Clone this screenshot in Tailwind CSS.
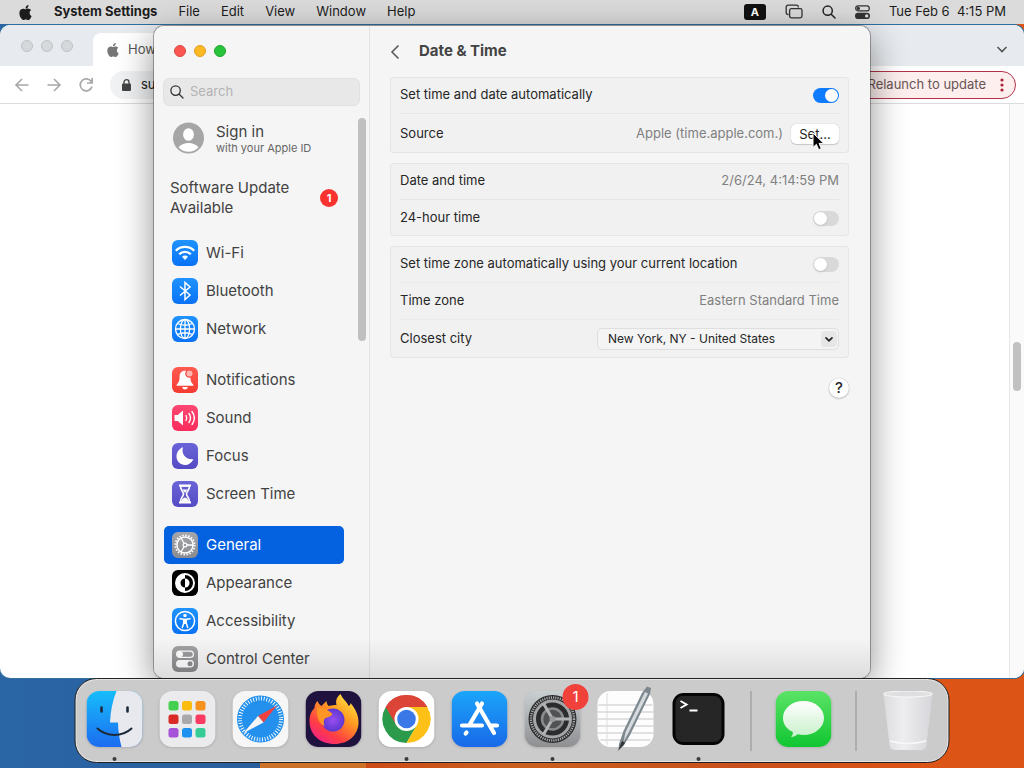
<!DOCTYPE html>
<html lang="en">

<head>
  <meta charset="UTF-8" />
  <meta name="viewport" content="width=device-width, initial-scale=1.0" />
  <title>Date &amp; Time</title>
  <script src="https://cdn.jsdelivr.net/npm/@tailwindcss/browser@4"></script>
</head>

<body class="font-['Inter','Liberation_Sans',sans-serif] text-[13px] h-screen overflow-hidden flex flex-col bg-[linear-gradient(90deg,#2a65a6_0,#2a5f9c_25.4%,#cb7128_25.4%,#cb7128_35.700%,#cc4a17_35.700%,#c9601f_50%,#c9501b_72%,#dc5416_90%)]">

  <svg class="hidden">
    <symbol id="apple" viewBox="0 0 24 24">
      <path fill="currentColor" d="M12.152 6.896c-.948 0-2.415-1.078-3.96-1.04-2.04.027-3.91 1.183-4.961 3.014-2.117 3.675-.546 9.103 1.519 12.09 1.013 1.454 2.208 3.09 3.792 3.039 1.52-.065 2.09-.987 3.935-.987 1.831 0 2.35.987 3.96.948 1.637-.026 2.676-1.48 3.676-2.948 1.156-1.688 1.636-3.325 1.662-3.415-.039-.013-3.182-1.221-3.22-4.857-.026-3.04 2.48-4.494 2.597-4.559-1.429-2.09-3.623-2.324-4.39-2.376-2-.156-3.675 1.09-4.61 1.09zM15.53 3.83c.843-1.012 1.4-2.427 1.245-3.83-1.207.052-2.662.805-3.532 1.818-.78.896-1.454 2.338-1.273 3.714 1.338.104 2.715-.688 3.559-1.701" />
    </symbol>
  </svg>

  <!-- Menu bar -->
  <header class="h-6 shrink-0 flex items-center justify-between bg-[#dbdbdb] text-[#1c1c1c] pl-[18px] pr-[18px]">
    <nav class="flex items-center gap-[21px]">
      <svg class="w-[15px] h-[15px]"><use href="#apple" /></svg>
      <a href="#" class="font-bold">System Settings</a>
      <a href="#">File</a>
      <a href="#">Edit</a>
      <a href="#">View</a>
      <a href="#">Window</a>
      <a href="#">Help</a>
    </nav>
    <div class="flex items-center gap-[19px]">
      <span class="w-[22px] h-4 rounded-[3px] bg-[#111] text-white text-[11px] leading-4 font-bold text-center">A</span>
      <svg class="w-[18px] h-4" viewBox="0 0 18 16" fill="none" stroke="#333" stroke-width="1.3">
        <path d="M3.500 10.500H3A1.800 1.800 0 0 1 1.200 8.700V3A1.800 1.800 0 0 1 3 1.200h8.500A1.800 1.800 0 0 1 13.300 3v.5" />
        <rect x="4.600" y="4.600" width="12.400" height="9.300" rx="1.800" />
      </svg>
      <svg class="w-[14px] h-[14px]" viewBox="0 0 14 14" fill="none" stroke="#222" stroke-width="1.500" stroke-linecap="round">
        <circle cx="5.700" cy="5.700" r="4.600" />
        <path d="M9.200 9.200L13 13" />
      </svg>
      <svg class="w-[15px] h-[14px]" viewBox="0 0 15 14">
        <rect x=".7" y=".9" width="13.600" height="5" rx="2.500" fill="none" stroke="#333" stroke-width="1.200" />
        <circle cx="3.300" cy="3.400" r="1.700" fill="#333" />
        <rect x="0" y="7.800" width="15" height="6.200" rx="3.100" fill="#333" />
        <circle cx="11.700" cy="10.900" r="1.700" fill="#dbdbdb" />
      </svg>
      <time class="whitespace-pre">Tue Feb 6  4:15 PM</time>
    </div>
  </header>

  <main class="relative flex-1">

    <!-- Browser window in the background -->
    <section class="absolute inset-x-0 top-px bottom-[90px] rounded-[10px] overflow-hidden bg-white flex flex-col shadow-[0_0_0_1px_#2f6f9f]">
      <div class="h-[41px] shrink-0 bg-[#e7eaee] flex items-end justify-between pr-4">
        <div class="flex items-end">
          <div class="flex gap-2 pl-[21px] pr-5 pb-[14px]">
            <span class="w-3 h-3 rounded-full bg-[#d6d9dc] border border-[#bfc2c5]"></span>
            <span class="w-3 h-3 rounded-full bg-[#d6d9dc] border border-[#bfc2c5]"></span>
            <span class="w-3 h-3 rounded-full bg-[#d6d9dc] border border-[#bfc2c5]"></span>
          </div>
          <div class="w-60 h-[33px] bg-white rounded-t-lg flex items-center gap-2 pl-[13px] text-[#555]">
            <svg class="w-[14px] h-[14px] text-[#777]"><use href="#apple" /></svg>
            <span>How to</span>
          </div>
        </div>
        <svg class="w-3 h-[33px]" viewBox="0 0 12 33" fill="none" stroke="#555" stroke-width="1.600"><path d="M1.500 14L6 18.500 10.500 14" /></svg>
      </div>
      <div class="h-[38px] shrink-0 border-b border-[#dcdcdc] flex items-center justify-between pl-[14px] pr-2">
        <div class="flex items-center gap-4 text-[#a8a8a8]">
          <svg class="w-4 h-4" viewBox="0 0 16 16" fill="none" stroke="currentColor" stroke-width="1.600"><path d="M14.500 8H2M8 2L2 8l6 6" /></svg>
          <svg class="w-4 h-4" viewBox="0 0 16 16" fill="none" stroke="currentColor" stroke-width="1.600"><path d="M1.500 8H14M8 2l6 6-6 6" /></svg>
          <svg class="w-4 h-4" viewBox="0 0 16 16" fill="none" stroke="currentColor" stroke-width="1.700"><path d="M13.500 5A6 6 0 1 0 14 9.500M14.200 1v5H9" /></svg>
          <div class="w-80 h-7 rounded-full bg-[#f1f2f3] flex items-center gap-[10px] pl-3 text-[#222]">
            <svg class="w-[9px] h-3" viewBox="0 0 9 12"><rect y="4.500" width="9" height="7.500" rx="1" fill="#444" /><path d="M2 5V3.200a2.500 2.500 0 0 1 5 0V5" fill="none" stroke="#444" stroke-width="1.300" /></svg>
            <span>support.apple.com</span>
          </div>
        </div>
        <button class="h-7 rounded-full border border-[#b3324a] bg-[#fcefed] flex items-center gap-[14px] pl-3 pr-[11px] text-[#6b5355]">
          Relaunch to update
          <svg class="w-1 h-[14px]" viewBox="0 0 4 14" fill="#a82238"><circle cx="2" cy="2" r="1.600" /><circle cx="2" cy="7" r="1.600" /><circle cx="2" cy="12" r="1.600" /></svg>
        </button>
      </div>
      <div class="flex-1 flex justify-end">
        <div class="w-[15px] border-l border-[#e8e8e8] bg-[#fafafa] flex flex-col items-center pt-[238px]">
          <span class="w-2 h-[49px] rounded-full bg-[#c1c1c1]"></span>
        </div>
      </div>
    </section>

    <!-- System Settings window -->
    <section class="absolute top-[2px] bottom-[90px] left-1/2 -translate-x-1/2 w-[716px] rounded-[10px] shadow-[0_0_0_1px_rgba(0,0,0,0.3),0_10px_36px_rgba(0,0,0,0.45)]">
      <div class="relative h-full rounded-[10px] overflow-hidden bg-[#f5f5f5] flex">

        <aside class="w-[216px] shrink-0 border-r border-[#e2e2e2] flex flex-col text-[15px] text-[#424242]">
          <div class="h-[50px] shrink-0 flex items-center gap-2 pl-5">
            <button aria-label="Close" class="w-3 h-3 rounded-full bg-[#fc5650] border border-[#dc4843]"></button>
            <button aria-label="Minimize" class="w-3 h-3 rounded-full bg-[#fdb924] border border-[#dfa023]"></button>
            <button aria-label="Zoom" class="w-3 h-3 rounded-full bg-[#27c33b] border border-[#1ea62d]"></button>
          </div>
          <label class="mt-[2px] mx-[9px] h-7 shrink-0 rounded-md bg-[#e8e8e8] border border-[#e1e1e1] flex items-center gap-[6px] pl-[6px]">
            <svg class="w-[14px] h-[14px]" viewBox="0 0 14 14" fill="none" stroke="#333" stroke-width="1.300" stroke-linecap="round"><circle cx="5.600" cy="5.600" r="4.700" /><path d="M9.200 9.200L13 13" /></svg>
            <input type="text" placeholder="Search" aria-label="Search" class="w-40 text-[13px] outline-none placeholder:text-[#b3b3b3]" />
          </label>

          <div class="relative flex-1 min-h-0 overflow-hidden pl-[10px] pr-[25px]">
            <a href="#" class="mt-4 flex items-center gap-3 pl-[9px]">
              <svg class="w-[31px] h-8" viewBox="0 0 31 31">
                <circle cx="15.500" cy="15.500" r="15.500" fill="#a6a6a6" />
                <ellipse cx="15.500" cy="12" rx="5.400" ry="6.300" fill="#fff" />
                <path d="M5.500 25c2-3 6-4.500 10-4.500s8 1.500 10 4.500a14 14 0 0 1-20 0z" fill="#fff" />
              </svg>
              <span class="flex flex-col">
                <span class="leading-5">Sign in</span>
                <span class="text-[11px] leading-3 text-[#666]">with your Apple ID</span>
              </span>
            </a>
            <a href="#" class="mt-6 flex items-center justify-between px-[6px] leading-5">
              <span class="w-32">Software Update Available</span>
              <span class="w-[18px] h-[18px] rounded-full bg-[#f9322f] text-white text-[11px] leading-[18px] font-bold text-center">1</span>
            </a>

            <nav class="mt-4 flex flex-col gap-[13px]">
              <div>
                <a href="#" class="h-[38px] flex items-center gap-2 pl-2">
                  <svg class="w-[26px] h-[26px] rounded-md bg-linear-to-b from-[#1f93ff] to-[#0a72f5]" viewBox="0 0 26 26" fill="none" stroke="#fff" stroke-width="2.300">
                    <path d="M3.800 10.700a13 13 0 0 1 18.400 0" /><path d="M7.200 14.200a8.200 8.200 0 0 1 11.600 0" />
                    <path d="M13 20l-3-3.300a4.200 4.200 0 0 1 6 0z" fill="#fff" stroke="none" />
                  </svg>
                  Wi-Fi
                </a>
                <a href="#" class="h-[38px] flex items-center gap-2 pl-2">
                  <svg class="w-[26px] h-[26px] rounded-md bg-linear-to-b from-[#1f93ff] to-[#0a72f5]" viewBox="0 0 26 26" fill="none" stroke="#fff" stroke-width="1.500">
                    <path d="M8 8.500l10 8.500-5 4.500V4.500l5 4.500-10 8.500" />
                  </svg>
                  Bluetooth
                </a>
                <a href="#" class="h-[38px] flex items-center gap-2 pl-2">
                  <svg class="w-[26px] h-[26px] rounded-md bg-linear-to-b from-[#1f93ff] to-[#0a72f5]" viewBox="0 0 26 26" fill="none" stroke="#fff" stroke-width="1.300">
                    <circle cx="13" cy="13" r="9.500" /><ellipse cx="13" cy="13" rx="4.600" ry="9.500" />
                    <path d="M13 3.500v19M3.500 13h19M5.500 7.500q7.500 3.500 15 0M5.500 18.500q7.500-3.500 15 0" />
                  </svg>
                  Network
                </a>
              </div>
              <div>
                <a href="#" class="h-[38px] flex items-center gap-2 pl-2">
                  <svg class="w-[26px] h-[26px] rounded-md bg-linear-to-b from-[#ff5a50] to-[#f53a30]" viewBox="0 0 26 26">
                    <path d="M13 3.800c3.600 0 5.300 2.400 5.400 5.700.1 5 1 6.300 3 8.200v1H4.600v-1c2-1.900 2.900-3.200 3-8.200.1-3.300 1.800-5.700 5.400-5.700zM10.300 20h5.400a2.700 2.400 0 0 1-5.400 0z" fill="#fff" />
                    <circle cx="17.500" cy="6.500" r="3.700" fill="#ffb6b0" stroke="#fa4b41" stroke-width="1.300" />
                  </svg>
                  Notifications
                </a>
                <a href="#" class="h-[38px] flex items-center gap-2 pl-2">
                  <svg class="w-[26px] h-[26px] rounded-md bg-linear-to-b from-[#ff4672] to-[#f92c5c]" viewBox="0 0 26 26" fill="none" stroke="#fff" stroke-width="1.400" stroke-linecap="round">
                    <path d="M2.500 10h3.300L11 5.500v15L5.800 16H2.500z" fill="#fff" stroke="none" />
                    <path d="M14 10.500q1.500 2.500 0 5M17 8.500q3 4.500 0 9M20 6.500q4.800 6.500 0 13" />
                  </svg>
                  Sound
                </a>
                <a href="#" class="h-[38px] flex items-center gap-2 pl-2">
                  <svg class="w-[26px] h-[26px] rounded-md bg-linear-to-b from-[#6b64d8] to-[#554bc4]" viewBox="0 0 26 26">
                    <path d="M11 4.300C9 11 13.500 17 21.500 16.200 19.500 20 16.500 22 13 22c-4.700 0-8.500-3.700-8.500-8.400 0-4.200 2.600-8 6.500-9.300z" fill="#fff" />
                  </svg>
                  Focus
                </a>
                <a href="#" class="h-[38px] flex items-center gap-2 pl-2">
                  <svg class="w-[26px] h-[26px] rounded-md bg-linear-to-b from-[#6b64d8] to-[#554bc4]" viewBox="0 0 26 26" fill="none" stroke="#fff" stroke-width="1.600" stroke-linejoin="round">
                    <path d="M7 4.500h12M7 21.500h12" stroke-width="2" />
                    <path d="M8.500 5c0 4.500 3 5.500 3 8s-3 3.500-3 8h9c0-4.500-3-5.500-3-8s3-3.500 3-8z" />
                    <path d="M10.500 8.500h5L13 12zM9.500 20.500c0-2 1.500-3.500 3.500-4 2 .5 3.500 2 3.500 4z" fill="#fff" stroke="none" />
                  </svg>
                  Screen Time
                </a>
              </div>
              <div>
                <a href="#" class="h-[38px] flex items-center gap-2 pl-2 rounded-[5px] bg-[#0461e0] text-white">
                  <svg class="w-[26px] h-[26px] rounded-md bg-linear-to-b from-[#a5a6aa] to-[#8b8c91]" viewBox="0 0 26 26" fill="none" stroke="#fff">
                    <circle cx="13" cy="13" r="9.700" stroke-width="1.800" stroke-dasharray="1.500 1.547" />
                    <circle cx="13" cy="13" r="8.100" stroke-width="1.500" />
                    <circle cx="13" cy="13" r="1.900" stroke-width="1.200" />
                    <path d="M15 13h6M12 11.300L9 6M12 14.700L9 20" stroke-width="1.300" />
                  </svg>
                  General
                </a>
                <a href="#" class="h-[38px] flex items-center gap-2 pl-2">
                  <svg class="w-[26px] h-[26px] rounded-md bg-black" viewBox="0 0 26 26">
                    <circle cx="13" cy="13" r="9" fill="none" stroke="#fff" stroke-width="2" />
                    <path d="M13 4a9 9 0 0 0 0 18v-4.500a4.500 4.500 0 0 1 0-9z" fill="#fff" />
                    <path d="M13 8.500a4.500 4.500 0 0 1 0 9z" fill="#fff" />
                  </svg>
                  Appearance
                </a>
                <a href="#" class="h-[38px] flex items-center gap-2 pl-2">
                  <svg class="w-[26px] h-[26px] rounded-md bg-linear-to-b from-[#1f93ff] to-[#0a72f5]" viewBox="0 0 26 26" fill="none" stroke="#fff" stroke-linecap="round">
                    <circle cx="13" cy="13" r="9.600" stroke-width="1.500" />
                    <circle cx="13" cy="7.500" r="1.700" fill="#fff" stroke="none" />
                    <path d="M8 10.700l5 .9 5-.9M11.800 12v3l-1.500 4.500M14.200 12v3l1.500 4.500" stroke-width="1.500" />
                    <path d="M11.300 11.300h3.400V16h-3.400z" fill="#fff" stroke="none" />
                  </svg>
                  Accessibility
                </a>
                <a href="#" class="h-[38px] flex items-center gap-2 pl-2">
                  <svg class="w-[26px] h-[26px] rounded-md bg-linear-to-b from-[#a2a2a5] to-[#89898c]" viewBox="0 0 26 26">
                    <rect x="4.600" y="5.100" width="16.800" height="6.300" rx="3.150" fill="none" stroke="#fff" stroke-width="1.300" />
                    <circle cx="8" cy="8.250" r="3" fill="#fff" />
                    <rect x="4" y="14" width="18" height="7.600" rx="3.800" fill="#fff" />
                    <circle cx="18" cy="17.800" r="2.500" fill="#8d8d90" />
                  </svg>
                  Control Center
                </a>
              </div>
            </nav>
            <span class="absolute right-[3px] top-3 w-2 h-[223px] rounded-full bg-[#c0c0c0]"></span>
          </div>
        </aside>

        <div class="flex-1 pl-5 pr-[21px] text-[#262626]">
          <div class="h-[51px] flex items-center gap-[18px]">
            <button aria-label="Back"><svg class="w-[11px] h-4" viewBox="0 0 11 16" fill="none" stroke="#555" stroke-width="1.500"><path d="M8.500 1.500L2 8l6.500 6.500" /></svg></button>
            <h1 class="text-[15px] font-bold text-[#444]">Date &amp; Time</h1>
          </div>

          <div class="flex flex-col gap-[10px]">
            <div class="bg-[#f1f1f1] rounded-sm inset-ring inset-ring-[#e5e5e5] px-[10px] divide-y divide-[#e6e6e6]">
              <div class="h-[37px] flex items-center justify-between">
                <label for="auto-time">Set time and date automatically</label>
                <input id="auto-time" type="checkbox" checked class="appearance-none w-[26px] h-[15px] rounded-full bg-[#d9d9d9] checked:bg-[#0f7bff] p-px flex checked:justify-end before:w-[13px] before:h-[13px] before:rounded-full before:bg-white" />
              </div>
              <div class="h-[39px] flex items-center justify-between">
                <span>Source</span>
                <div class="flex items-center gap-2">
                  <span class="text-[#808080]">Apple (time.apple.com.)</span>
                  <button class="w-12 h-5 rounded-[5px] bg-white shadow-[0_0_1px_rgba(0,0,0,0.3),0_1px_1px_rgba(0,0,0,0.15)] leading-5">Set...</button>
                </div>
              </div>
            </div>

            <div class="bg-[#f1f1f1] rounded-sm inset-ring inset-ring-[#e5e5e5] px-[10px] divide-y divide-[#e6e6e6]">
              <div class="h-[37px] flex items-center justify-between">
                <span>Date and time</span>
                <span class="text-[#808080]">2/6/24, 4:14:59 PM</span>
              </div>
              <div class="h-9 flex items-center justify-between">
                <label for="hour24">24-hour time</label>
                <input id="hour24" type="checkbox" class="appearance-none w-[26px] h-[15px] rounded-full bg-[#d9d9d9] checked:bg-[#0f7bff] p-px flex checked:justify-end before:w-[13px] before:h-[13px] before:rounded-full before:bg-white before:shadow" />
              </div>
            </div>

            <div class="bg-[#f1f1f1] rounded-sm inset-ring inset-ring-[#e5e5e5] px-[10px] divide-y divide-[#eaeaea]">
              <div class="h-[37px] flex items-center justify-between">
                <label for="auto-zone">Set time zone automatically using your current location</label>
                <input id="auto-zone" type="checkbox" class="appearance-none w-[26px] h-[15px] rounded-full bg-[#d9d9d9] checked:bg-[#0f7bff] p-px flex checked:justify-end before:w-[13px] before:h-[13px] before:rounded-full before:bg-white before:shadow" />
              </div>
              <div class="h-[37px] flex items-center justify-between">
                <span>Time zone</span>
                <span class="text-[#808080]">Eastern Standard Time</span>
              </div>
              <div class="h-[38px] flex items-center justify-between">
                <label for="city">Closest city</label>
                <div class="relative">
                  <select id="city" class="appearance-none w-[242px] h-[22px] rounded-[5px] border border-[#dedede] bg-[#f4f4f4] pl-[10px] text-xs leading-5">
                    <option>New York, NY - United States</option>
                  </select>
                  <svg class="absolute right-[2px] top-[3px] w-4 h-4 rounded-sm bg-[#e6e6e6] pointer-events-none" viewBox="0 0 16 16" fill="none" stroke="#222" stroke-width="1.700" stroke-linecap="round"><path d="M5 6.800l3 3 3-3" /></svg>
                </div>
              </div>
            </div>
          </div>

          <div class="mt-5 flex justify-end">
            <button class="w-5 h-5 rounded-full bg-white shadow-[0_0_1px_rgba(0,0,0,0.3),0_1px_2px_rgba(0,0,0,0.2)] text-[15px] leading-5 font-medium">?</button>
          </div>
        </div>

        <div class="absolute inset-x-0 bottom-0 h-10 bg-linear-to-b from-transparent to-black/10 pointer-events-none"></div>
      </div>
    </section>

    <!-- Dock -->
    <footer class="absolute bottom-[5px] left-1/2 -translate-x-1/2 h-[85px] rounded-[22px] bg-[#cbcbcb] border border-[#222] inset-ring inset-ring-white/50 pl-[11px] pr-3 pt-3 flex items-start">
      <div class="flex gap-[17px]">
        <div class="flex flex-col items-center gap-[10px]">
          <svg class="w-14 h-14 rounded-[13px] shadow-sm" viewBox="0 0 56 56">
            <defs><linearGradient id="finder" x2="0" y2="1"><stop stop-color="#17bdfb" /><stop offset="1" stop-color="#1c6cf0" /></linearGradient></defs>
            <rect width="56" height="56" fill="url(#finder)" />
            <path d="M30 0C26 10 24 20 23.500 31.500h8C31.500 40 33 48 35 56h21V0z" fill="#e7e9ef" />
            <path d="M15 16.500v4M41 16.500v4" stroke="#1d2a3a" stroke-width="2.600" stroke-linecap="round" />
            <path d="M11 37.500c9 8.500 25 8.500 34 0" fill="none" stroke="#1d2a3a" stroke-width="2" stroke-linecap="round" />
          </svg>
          <span class="w-1 h-1 rounded-full bg-[#3a3a3a]"></span>
        </div>
        <svg class="w-14 h-14 rounded-[13px] shadow-sm" viewBox="0 0 56 56">
          <rect width="56" height="56" fill="#ebebed" />
          <rect x="9" y="10" width="10" height="9.500" rx="2.500" fill="#45cf50" /><rect x="22.500" y="10" width="10" height="9.500" rx="2.500" fill="#fbbc0f" /><rect x="36" y="10" width="10" height="9.500" rx="2.500" fill="#f5921e" />
          <rect x="9" y="23.500" width="10" height="9.500" rx="2.500" fill="#d92a25" /><rect x="22.500" y="23.500" width="10" height="9.500" rx="2.500" fill="#a9a9ac" /><rect x="36" y="23.500" width="10" height="9.500" rx="2.500" fill="#fb3b62" />
          <rect x="9" y="37" width="10" height="9.500" rx="2.500" fill="#a551d8" /><rect x="22.500" y="37" width="10" height="9.500" rx="2.500" fill="#1e92ee" /><rect x="36" y="37" width="10" height="9.500" rx="2.500" fill="#35cc96" />
        </svg>
        <svg class="w-14 h-14 rounded-[13px] shadow-sm" viewBox="0 0 56 56">
          <rect width="56" height="56" fill="#f6f6f6" />
          <circle cx="28" cy="28" r="23.500" fill="#2290ec" />
          <circle cx="28" cy="28" r="20.500" fill="none" stroke="#fff" stroke-width="4" stroke-dasharray=".9 1.783" />
          <path d="M44.500 14.500L31 31.500 25.500 25z" fill="#ef4140" /><path d="M11 42l14.500-17L31 31.500z" fill="#f5f5f5" />
        </svg>
        <svg class="w-14 h-14 rounded-[13px] shadow-sm" viewBox="0 0 56 56">
          <defs>
            <linearGradient id="fox" x1=".9" y1="0" x2=".2" y2="1"><stop stop-color="#fff04a" /><stop offset=".4" stop-color="#ff9a20" /><stop offset=".75" stop-color="#ff3c45" /><stop offset="1" stop-color="#f0208a" /></linearGradient>
            <radialGradient id="globe"><stop stop-color="#9a4df0" /><stop offset="1" stop-color="#5c38d0" /></radialGradient>
          </defs>
          <rect width="56" height="56" fill="#20123f" />
          <path d="M35 3c2 5 7 8 8 12 2-1 2-2 2-3 5 6 8 12 8 19 0 13-10 22-24 22C15 53 4 44 4 30c0-6 2-10 5-13 0-3 1-5 3-7 1 2 2 4 4 5l5-5c0 2 1 4 2 5 4-1 6-1 8-1-1-4 0-8 4-11z" fill="url(#fox)" />
          <circle cx="27.500" cy="29" r="11.500" fill="url(#globe)" />
          <path d="M12 16c6 1 11 3 15 7-1 3-6 3-8 5-1 2-1 4 0 7-5-2-9-10-7-19z" fill="#ff9524" />
        </svg>
        <div class="flex flex-col items-center gap-[10px]">
          <svg class="w-14 h-14 rounded-[13px] shadow-sm" viewBox="0 0 56 56">
            <rect width="56" height="56" fill="#fff" />
            <path d="M28 28L7.200 16A24 24 0 0 1 48.800 16z" fill="#dc4437" /><path d="M28 28L7.200 16A24 24 0 0 0 28 52l10.400-18z" fill="#2b9a4b" />
            <path d="M28 16h20.800A24 24 0 0 1 28 52l10.400-18z" fill="#fcc016" /><path d="M28 16h20.800A24 24 0 0 0 7.200 16l10.400 18z" fill="#dc4437" />
            <circle cx="28" cy="28" r="12" fill="#fff" /><circle cx="28" cy="28" r="9.300" fill="#3a78e8" />
          </svg>
          <span class="w-1 h-1 rounded-full bg-[#3a3a3a]"></span>
        </div>
        <svg class="w-14 h-14 rounded-[13px] shadow-sm" viewBox="0 0 56 56" stroke="#fff" stroke-width="4.200" stroke-linecap="round">
          <defs><linearGradient id="store" x2="0" y2="1"><stop stop-color="#1ba5fa" /><stop offset="1" stop-color="#1969e8" /></linearGradient></defs>
          <rect width="56" height="56" fill="url(#store)" stroke="none" />
          <path d="M30.500 12.500L18.500 33M25.500 12.500L42.500 42M15 41.500l-.8 1M10.500 34.500h20M39.500 34.500h6" />
        </svg>
        <div class="relative flex flex-col items-center gap-[10px]">
          <svg class="w-14 h-14 rounded-[13px] shadow-sm" viewBox="0 0 56 56" fill="none">
            <defs><linearGradient id="gear" x2="0" y2="1"><stop stop-color="#c9d0d2" /><stop offset="1" stop-color="#8f8f92" /></linearGradient></defs>
            <rect width="56" height="56" fill="url(#gear)" />
            <circle cx="28" cy="28" r="24" fill="#2b2c2e" />
            <circle cx="28" cy="28" r="21.500" stroke="#aaa" stroke-width="2.500" stroke-dasharray="1.200 1.050" />
            <circle cx="28" cy="28" r="18" stroke="#a5a6a8" stroke-width="3" />
            <circle cx="28" cy="28" r="10.500" fill="#505254" stroke="#898b8d" stroke-width="2.500" />
            <path d="M28 28h18M28 28l-9-15.600M28 28l-9 15.600" stroke="#b2b3b5" stroke-width="3" />
            <circle cx="28" cy="28" r="3" fill="#999" />
          </svg>
          <span class="w-1 h-1 rounded-full bg-[#3a3a3a]"></span>
          <span class="absolute -top-[7px] -right-2 w-[26px] h-[26px] rounded-full bg-[#f0413b] text-white text-[15px] leading-[26px] text-center">1</span>
        </div>
        <svg class="w-14 h-14 overflow-visible" viewBox="0 0 56 56">
          <rect width="56" height="56" rx="13" fill="#fdfdfd" />
          <path d="M1 14h54M0 21h56M0 28h56M0 35h56M0 42h56M3 49h50" stroke="#c5c5c8" />
          <path d="M9.500 2v52" stroke="#ddd" />
          <path d="M49.500 -4.500l4 1.500-1 6-20 41-6.500 11-5 4 .5-6 4.500-13L44.500 2z" fill="#7d878e" />
          <path d="M47.500 1l3 1.500L31 42l-5 9 2-10z" fill="#d4dadd" />
          <path d="M24.500 50l3 2-7 8z" fill="#333" />
        </svg>
        <div class="flex flex-col items-center gap-[10px]">
          <svg class="w-14 h-14" viewBox="0 0 56 56">
            <rect x="2" y="2" width="52" height="52" rx="11" fill="#050505" /><rect x="5" y="5" width="46" height="46" rx="7" fill="#262626" />
            <path d="M10 10l6 3.500-6 3.500M19 19.500h8" fill="none" stroke="#fff" stroke-width="2" />
          </svg>
          <span class="w-1 h-1 rounded-full bg-[#3a3a3a]"></span>
        </div>
      </div>
      <span class="w-px h-[60px] mx-6 bg-[#8f8f8f]"></span>
      <svg class="w-14 h-14 rounded-[13px] shadow-sm" viewBox="0 0 56 56">
        <defs>
          <linearGradient id="msg" x2="0" y2="1"><stop stop-color="#5be366" /><stop offset="1" stop-color="#10c631" /></linearGradient>
          <linearGradient id="bubble" x2="0" y2="1"><stop stop-color="#fff" /><stop offset="1" stop-color="#c9f0cb" /></linearGradient>
        </defs>
        <rect width="56" height="56" fill="url(#msg)" />
        <path d="M28 10c11.500 0 20.500 7.500 20.500 17S39.500 44 28 44c-2 0-4-.2-6-.8-1.500 1.500-4 2.800-6.500 2.800 1.500-1.500 2-3 1.800-5C11 38 7.500 33 7.500 27c0-9.500 9-17 20.500-17z" fill="url(#bubble)" />
      </svg>
      <span class="w-px h-[60px] mx-6 bg-[#8f8f8f]"></span>
      <svg class="w-14 h-[60px]" viewBox="0 0 56 60">
        <defs><linearGradient id="bin" x2="1" y2="0"><stop stop-color="#dcdcdf" /><stop offset=".4" stop-color="#eeeef0" /><stop offset="1" stop-color="#d6d6da" /></linearGradient></defs>
        <path d="M3 2h49l-6 52q-.5 5-6 5H15q-5.500 0-6-5z" fill="url(#bin)" />
        <ellipse cx="27.500" cy="3" rx="24.500" ry="3" fill="#dfdfe2" stroke="#f8f8f8" />
        <path d="M9.500 50q18 5 36 0" fill="none" stroke="#f8f8f8" stroke-width="1.500" />
      </svg>
    </footer>

    <!-- Pointer -->
    <svg class="absolute left-1/2 top-[108px] ml-[300px] w-[13px] h-[19px]" viewBox="0 0 13 19">
      <path d="M1 1v14.500l3.400-3.200 2.300 5.400 2.600-1.100L7 11.400h4.800z" fill="#000" stroke="#fff" />
    </svg>
  </main>

</body>

</html>
